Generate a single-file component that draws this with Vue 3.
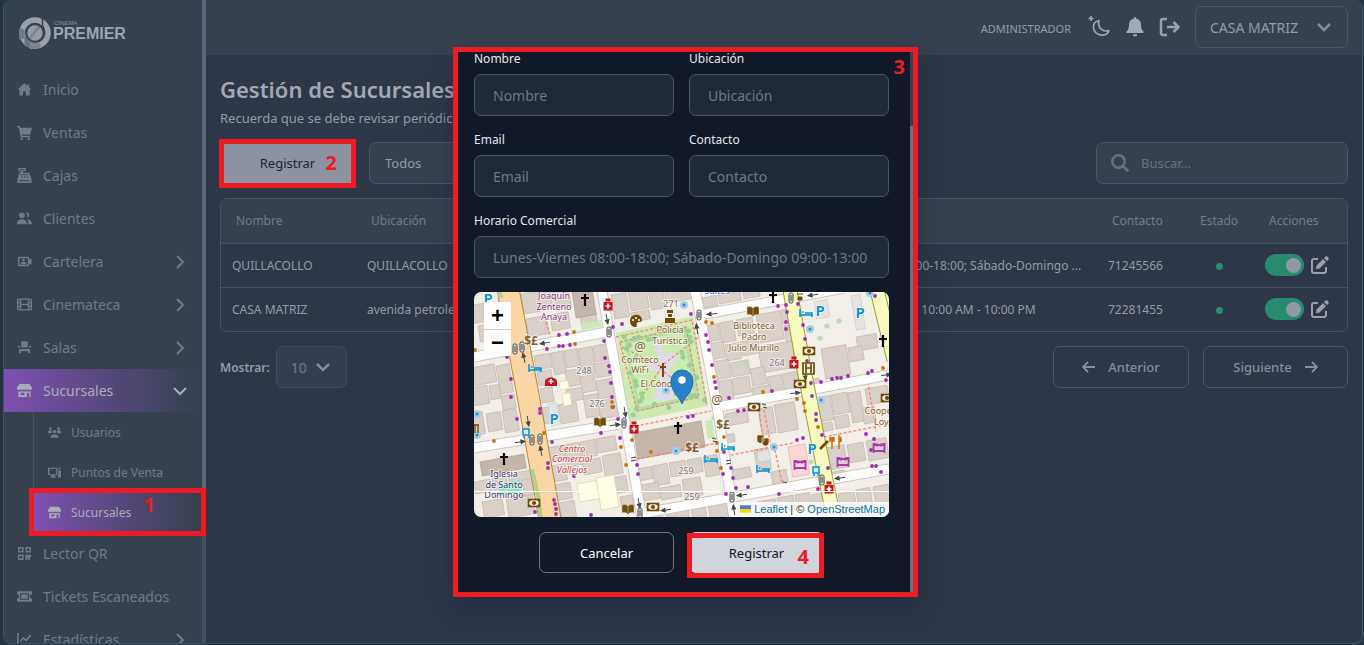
<script setup>
import { ref } from 'vue'

const icons = {
  home: 'M8 1 .5 8h2v6.5h4V10h3v4.5h4V8h2L13 5.6V2.500h-1.500v1.700z',
  cart: 'M0 1h3l.6 2H16l-2 7H5l.3 1.500H14V13H4L1.800 2.500H0zM5 13.500a1.300 1.300 0 1 0 .1 0zM12.500 13.500a1.300 1.300 0 1 0 .1 0z',
  register: 'M1.500 0h8v3.500H6.500V5H13l2.500 7v3.500a.5.5 0 0 1-.5.500H1a.5.5 0 0 1-.5-.5V12L2.500 5H4V3.500H1.500zM3 1.300v1h5v-1zM3.500 6.500v1.200H5V6.500zm3 0v1.200H8V6.500zm3 0v1.200H11V6.500zM4.500 9v1.200H6V9zm3 0v1.200H9V9zm3 0v1.200H12V9zM2.500 13v1.200h11V13z',
  users: 'M5.300 1.500a3 3 0 1 1 0 6 3 3 0 0 1 0-6zM0 14c0-7 10.600-7 10.600 0zM9.500 1.800c4-1 5 4.700 1 5.500 1-1.800.8-4-1-5.500zM11 8.500c3 .3 5 2.500 5 5.500h-4c0-2.200-.2-4-1-5.500z',
  board: 'M2 3h10a1 1 0 0 1 1 1v2l2.500-1.500v7L13 10v2a1 1 0 0 1-1 1H2a1 1 0 0 1-1-1V4a1 1 0 0 1 1-1zm.5 1.500v7h9v-7zM7 5a1.500 1.500 0 1 1 0 3 1.500 1.500 0 0 1 0-3zm-3 6c0-3.500 6-3.500 6 0z',
  film: 'M1.500 1.500h13A1.500 1.500 0 0 1 16 3v10a1.500 1.500 0 0 1-1.500 1.500h-13A1.500 1.500 0 0 1 0 13V3a1.500 1.500 0 0 1 1.500-1.500zM1.500 3v2.500H3V3zm3 0v4.300h7V3zM13 3v2.500h1.500V3zM1.500 6.800v2.500H3V6.800zm11.500 0v2.500h1.500V6.800zM4.500 8.800V13h7V8.800zm-3 1.800V13H3v-2.400zm11.500 0V13h1.500v-2.400z',
  seat: 'M4.500 1.500h7V8h-7zM1 6h2v2.300H1zm12 0h2v2.300h-2zM3 9.500h10a1 1 0 0 1 1 1V14h-2v-2H4v2H2v-3.500a1 1 0 0 1 1-1z',
  store: 'M2.500 1h11L16 5v1.500c-1 1.500-2.500 1.500-3.200 0-.8 1.500-2.400 1.500-3.200 0-.8 1.500-2.400 1.500-3.200 0-.8 1.500-2.400 1.500-3.200 0C2.500 8 1 8 0 6.500V5zM1.500 9h13v6H13v-4.500h-2.500V15h-9zM4 10.500V13h4v-2.500z',
  group: 'M3 1.500a1.700 1.700 0 1 1-.1 0zm10 0a1.700 1.700 0 1 1-.1 0zM8 4.500a2.200 2.200 0 1 1-.1 0zM0 8c0-3.500 4.500-3 5-1.500C4.500 7 4.500 8 5.500 9H0zm16 0c0-3.500-4.500-3-5-1.500.5.5.5 1.500-.5 2.500H16zM3 14.500c0-6 10-6 10 0z',
  pos: 'M1 2h9.500a1 1 0 0 1 1 1v7.500a1 1 0 0 1-1 1H8V13h1.500v1.500H3V13h1.500v-1.500H1a1 1 0 0 1-1-1V3a1 1 0 0 1 1-1zm.7 1.500V10H10V3.500zM12.500 5.500H16V14h-3.500zM13 2h2.500v2H13z',
  qr: 'M1 1h6v6H1zm1.600 1.600v2.800h2.800V2.600zM9 1h6v6H9zm1.600 1.600v2.800h2.800V2.600zM1 9h6v6H1zm1.600 1.600v2.800h2.800v-2.800zM9 9h2.500l1 1.500V9H15v3h-1.200v3H12v-2h-1v2H9z',
  ticket: 'M1 2.500h14a1 1 0 0 1 1 1v2.200a2.300 2.300 0 0 0 0 4.600v2.200a1 1 0 0 1-1 1H1a1 1 0 0 1-1-1v-2.200a2.300 2.300 0 0 0 0-4.600V3.500a1 1 0 0 1 1-1zM3.300 4.500v7h9.400v-7zm1.200 1.200h7v4.600h-7z',
  chart: 'M0 1h1.800v11.200H15V14H0zM3 9.500 6.500 5l3 2.500L14 3l1.200 1.200L9.600 10 6.700 7.500 4.300 10.700z'
}

const menu = [
  { label: 'Inicio', icon: 'home' },
  { label: 'Ventas', icon: 'cart' },
  { label: 'Cajas', icon: 'register' },
  { label: 'Clientes', icon: 'users' },
  { label: 'Cartelera', icon: 'board', more: true },
  { label: 'Cinemateca', icon: 'film', more: true },
  { label: 'Salas', icon: 'seat', more: true },
  {
    label: 'Sucursales', icon: 'store', open: true,
    children: [
      { label: 'Usuarios', icon: 'group' },
      { label: 'Puntos de Venta', icon: 'pos' },
      { label: 'Sucursales', icon: 'store', active: true }
    ]
  },
  { label: 'Lector QR', icon: 'qr' },
  { label: 'Tickets Escaneados', icon: 'ticket' },
  { label: 'Estadísticas', icon: 'chart', more: true }
]

const rows = ref([
  { name: 'QUILLACOLLO', place: 'QUILLACOLLO', hours: 'Lunes-Viernes 08:00-18:00; Sábado-Domingo ...', phone: '71245566', on: true },
  { name: 'CASA MATRIZ', place: 'avenida petrolera', hours: 'Lunes a Domingo: 10:00 AM - 10:00 PM', phone: '72281455', on: true }
])

const fields = [
  { id: 'nombre', label: 'Nombre', hint: 'Nombre' },
  { id: 'ubicacion', label: 'Ubicación', hint: 'Ubicación' },
  { id: 'email', label: 'Email', hint: 'Email' },
  { id: 'contacto', label: 'Contacto', hint: 'Contacto' },
  { id: 'horario', label: 'Horario Comercial', hint: 'Lunes-Viernes 08:00-18:00; Sábado-Domingo 09:00-13:00', wide: true }
]

// City blocks follow the slanted street grid: x, y, width, height
const quad = ([x, y, w, h]) =>
  `M${x} ${y}l${w} ${-0.18 * w}l${0.16 * h} ${h}l${-w} ${0.18 * w}z`

const buildings = [
  [-4, 76, 24, 18], [22, 74, 13, 28], [-3, 96, 16, 18], [15, 94, 10, 14], [27, 104, 13, 14], [12, 122, 14, 18], [28, 119, 14, 22], [-6, 122, 14, 22],
  [4, 34, 12, 16], [19, 30, 18, 20], [-6, 14, 16, 18], [0, 190, 16, 12], [18, 186, 14, 18], [34, 182, 22, 12], [8, 210, 20, 16], [32, 206, 26, 20], [48, 188, 10, 16],
  [47, 2, 16, 20], [64, -1, 12, 18], [78, -4, 16, 22], [52, 27, 20, 18], [76, 23, 18, 16], [106, 24, 16, 12],
  [60, 64, 16, 14], [77, 61, 12, 22], [90, 59, 13, 17], [104, 57, 14, 26], [119, 54, 14, 16], [63, 80, 14, 14], [91, 79, 14, 16], [120, 72, 16, 14], [106, 85, 14, 16], [66, 97, 12, 14], [92, 98, 16, 12], [122, 89, 18, 18], [109, 104, 14, 22], [84, 113, 18, 19], [68, 116, 10, 16], [124, 109, 18, 18],
  [73, 156, 16, 14], [90, 153, 15, 22], [106, 150, 15, 16], [122, 147, 19, 14], [77, 174, 14, 16], [108, 169, 18, 14], [128, 164, 18, 20], [80, 193, 16, 16], [132, 187, 20, 16], [85, 211, 15, 16], [146, 205, 12, 14],
  [137, 3, 15, 24], [154, -1, 18, 20], [174, -4, 14, 22], [190, -5, 26, 16], [157, 21, 18, 9],
  [163, 177, 14, 12], [178, 174, 15, 20], [195, 171, 16, 14], [213, 168, 14, 14], [229, 165, 14, 20], [167, 193, 17, 16], [186, 196, 20, 12], [208, 188, 18, 18], [170, 224, 18, 12], [192, 220, 22, 16], [217, 216, 14, 16], [234, 213, 18, 14],
  [228, 6, 14, 10], [244, 3, 22, 9], [269, 0, 16, 7],
  [231, 34, 13, 16], [245, 31, 14, 20], [262, 28, 16, 16], [282, 23, 24, 28], [307, 18, 8, 14], [234, 52, 15, 16], [251, 53, 14, 16], [266, 50, 18, 14], [284, 55, 34, 26], [238, 70, 16, 18], [256, 71, 18, 14], [241, 90, 16, 20], [258, 87, 17, 16], [276, 77, 14, 17], [293, 85, 14, 14], [308, 82, 15, 16], [278, 96, 18, 10], [310, 34, 8, 16],
  [284, 117, 14, 26], [300, 113, 20, 28], [251, 122, 22, 12], [280, 158, 14, 22], [246, 144, 14, 8], [297, 180, 15, 12], [258, 178, 18, 10],
  [265, 215, 16, 12], [283, 210, 18, 18], [303, 206, 16, 14], [321, 203, 14, 20], [337, 203, 12, 18],
  [347, 57, 25, 30], [382, 45, 20, 14], [374, 56, 14, 14], [335, 88, 10, 8],
  [342, 106, 14, 24], [357, 103, 16, 20], [374, 101, 12, 30], [360, 125, 14, 12], [346, 132, 12, 8], [391, 97, 22, 16], [388, 116, 12, 16],
  [352, 156, 18, 22], [373, 153, 16, 18], [392, 149, 20, 20], [354, 181, 16, 8],
  [364, 202, 16, 22], [382, 198, 14, 16], [399, 195, 20, 24], [384, 216, 14, 12]
]
const specials = [
  { c: 'church', q: [98, 0, 20, 26] }, { c: 'church', q: [6, 170, 44, 14] }, { c: 'church', q: [160, 141, 67, 26] },
  { c: 'yellow', q: [85, 90, 9, 8] }, { c: 'yellow', q: [88, 102, 8, 12] }, { c: 'yellow', q: [103, 192, 22, 18] }, { c: 'yellow', q: [122, 186, 18, 32] },
  { c: 'pink', q: [314, 155, 17, 30] }, { c: 'sport', q: [24, 192, 22, 12] }, { c: 'lot', q: [74, 112, 8, 22] }, { c: 'lot', q: [340, 10, 13, 17] }, { c: 'lot', q: [377, 4, 9, 34] },
  { c: 'grass', q: [107, 32, 20, 6] }, { c: 'grass', q: [231, 129, 7, 18] }, { c: 'grass', q: [55, 49, 22, 5] }, { c: 'lot', q: [283, 160, 12, 10] }
]
const purple = [[85, 43], [93, 42], [85, 54], [89, 54], [96, 53], [73, 57], [139, 35], [148, 32], [130, 49], [131, 66], [135, 74], [136, 80], [137, 91], [138, 105], [139, 115], [144, 127], [33, 65], [37, 87], [37, 105], [66, 117], [66, 121], [43, 127], [78, 150], [127, 141], [146, 146], [163, 173], [164, 182], [100, 184], [74, 171], [74, 176], [80, 208], [81, 212], [82, 217], [82, 222], [61, 220], [117, 223], [217, 22], [232, 43], [234, 50], [235, 58], [238, 73], [241, 90], [242, 96], [255, 106], [264, 119], [270, 118], [298, 99], [304, 14], [312, 13], [313, 20], [312, 30], [312, 37], [329, 33], [331, 47], [333, 69], [337, 91], [338, 104], [342, 122], [342, 128], [347, 90], [358, 87], [363, 86], [367, 86], [374, 84], [394, 81], [398, 79], [412, 88], [354, 176], [398, 174], [402, 174], [407, 180], [344, 197], [323, 148], [329, 146], [257, 176], [259, 186], [262, 196], [274, 195], [250, 160], [249, 182], [252, 202], [305, 202], [392, 142], [400, 147], [214, 125], [219, 124], [348, 143], [397, 158], [401, 4], [324, 12]]
const orange = [[100, 40], [1, 58], [101, 52], [138, 110], [138, 115], [70, 141], [20, 149], [158, 148], [147, 155], [177, 160], [152, 173], [232, 30], [238, 31], [240, 85], [289, 100], [323, 107], [330, 111], [331, 119], [344, 135], [250, 145], [243, 151], [243, 159], [247, 176], [409, 76]]
const trees = [[44, 3], [45, 10], [271, 71], [346, 46], [353, 34], [365, 29], [405, 7], [240, 126], [243, 134], [337, 170]]
const parkTrees = Array.from({ length: 34 }, (_, i) => {
  const t = (i * 7) % 17 / 17
  const s = i < 17 ? 0.06 + (i % 3) * 0.05 : 0.8 + (i % 3) * 0.07
  return i % 2 ? [146 + 76 * t + 14 * s, 44 - 16 * t + 84 * s] : [146 + 72 * s + 13 * t, 46 - 15 * s + 76 * t]
})
const fountains = [[192, 98], [3, 122], [3, 143], [202, 159], [210, 13], [336, 37], [347, 108], [300, 155], [396, 1]]
const lights = [[41, 57], [48, 55], [135, 40], [150, 131], [58, 148], [66, 147], [166, 221], [225, 23], [317, 6], [348, 188], [258, 205]]
const arrows = [[71, 51, 170], [50, 66, 258], [133, 27, 80], [141, 133, -8], [46, 150, -8], [54, 129, 82], [67, 159, 260], [151, 120, 80], [165, 211, 80], [192, 218, 172], [238, 22, 175], [223, 37, 262], [339, 3, 172], [331, 83, 82], [321, 101, -5], [366, 186, 172], [268, 203, 172], [260, 218, 262], [412, 83, -6]]
const crosses = [[111, 8], [204, 136], [30, 167], [299, 5], [409, 49]]
const pharmacies = [[134, 13], [160, 136], [320, 71], [355, 196]]
const money = [[60, 211], [179, 215], [335, 59], [326, 92], [280, 115], [413, 106]]
const books = [[126, 130], [154, 217], [279, 19]]
const beds = [[61, 76], [254, 155], [237, 167], [289, 177], [332, 21]]
const gates = [[326, 173], [369, 170], [405, 156]]
</script>

<template>
  <div class="page">
    <div class="frame">
      <aside class="sidebar">
        <a class="logo" href="#" aria-label="Cinema Premier">
          <svg class="logo-mark" viewBox="0 0 32 32" aria-hidden="true">
            <circle cx="16" cy="16" r="13" fill="none" stroke="#9ba1aa" stroke-width="5.500" />
            <path d="M3 22A13 13 0 0 1 3.500 12" fill="none" stroke="#717a86" stroke-width="5" />
            <path d="M5.500 14v14l5.500 3V22z" fill="#68727f" />
            <path d="M11 24c3 2 7 2 9 0l2 6-5 2h-6z" fill="#7b8490" />
            <path d="M23.500 0v9c2 3 2.500 6 2 9" fill="none" stroke="#364150" stroke-width="1.500" />
            <circle cx="16" cy="16" r="9.500" fill="#364150" />
            <circle cx="16" cy="16" r="7.700" fill="#979da7" />
            <path d="M9.800 20.500 19 8.900a7.700 7.700 0 0 1 2.500 1.700L11.500 22.200z" fill="#7d8590" />
          </svg>
          <span class="logo-text"><small>CINEMA</small><b>PREMIER</b></span>
        </a>
        <nav>
          <template v-for="item in menu" :key="item.label">
            <a href="#" class="item" :class="{ open: item.open }">
              <svg class="icon" viewBox="0 0 16 16" aria-hidden="true"><path :d="icons[item.icon]" /></svg>
              <span>{{ item.label }}</span>
              <svg v-if="item.more || item.open" class="arrow" viewBox="0 0 16 16" aria-hidden="true">
                <path :d="item.open ? 'M2 5l6 6 6-6' : 'M5 2l6 6-6 6'" />
              </svg>
            </a>
            <div v-if="item.children" class="sub">
              <a v-for="c in item.children" :key="c.label" href="#" class="subitem" :class="{ active: c.active }">
                <svg class="subicon" viewBox="0 0 16 16" aria-hidden="true"><path :d="icons[c.icon]" /></svg>
                <span>{{ c.label }}</span>
                <span v-if="c.active" class="mark mark-menu"><b>1</b></span>
              </a>
            </div>
          </template>
        </nav>
        <i class="rail"></i>
      </aside>

      <div class="body">
        <header class="topbar">
          <span class="role">ADMINISTRADOR</span>
          <button class="plain" aria-label="Tema">
            <svg width="24" height="24" viewBox="0 0 24 24" aria-hidden="true">
              <path d="M12 5.500c-4 1-6 4-5.500 7.500 1 7.500 13 10 15.500 2.500-6 2-12-3-10-10z" fill="none" stroke="#a0a6b0" stroke-width="1.700" stroke-linejoin="round" />
              <path d="M4 1v5M1.500 3.500h5" stroke="#a0a6b0" stroke-width="1.700" />
            </svg>
          </button>
          <button class="plain" aria-label="Notificaciones">
            <svg width="20" height="22" viewBox="0 0 20 22" aria-hidden="true">
              <path d="M10 1a1.300 1.300 0 0 1 1.300 1.300v.5c3.200.7 4.700 3 4.700 5.700 0 4 .8 5.500 2.500 7.200V17h-17v-1.300C3.200 14 4 12.500 4 8.500c0-2.700 1.500-5 4.700-5.700v-.5A1.300 1.300 0 0 1 10 1zM7.700 18.300h4.600a2.300 2.300 0 0 1-4.600 0z" fill="#a4aab3" />
            </svg>
          </button>
          <button class="plain" aria-label="Salir">
            <svg width="22" height="20" viewBox="0 0 22 20" aria-hidden="true">
              <path d="M8 2H4a2 2 0 0 0-2 2v12a2 2 0 0 0 2 2h4M8 10h11M14.500 5l5 5-5 5" fill="none" stroke="#9aa1ab" stroke-width="2.500" stroke-linejoin="round" />
            </svg>
          </button>
          <span class="select select-branch">
            <select aria-label="Sucursal"><option>CASA MATRIZ</option></select>
            <svg viewBox="0 0 16 16" aria-hidden="true"><path d="M2 5l6 6 6-6" /></svg>
          </span>
        </header>

        <main>
          <h1>Gestión de Sucursales</h1>
          <p class="lead">Recuerda que se debe revisar periódicamente</p>
          <div class="tools">
            <button class="register">Registrar<span class="mark"><b>2</b></span></button>
            <span class="select select-filter">
              <select aria-label="Filtro"><option>Todos</option></select>
              <svg viewBox="0 0 16 16" aria-hidden="true"><path d="M2 5l6 6 6-6" /></svg>
            </span>
            <label class="search">
              <svg viewBox="0 0 18 18" aria-hidden="true"><circle cx="7.500" cy="7.500" r="6.200" /><path d="M12 12l5.300 5.300" /></svg>
              <input type="search" placeholder="Buscar..." aria-label="Buscar" />
            </label>
          </div>

          <div class="tablebox">
            <table>
              <colgroup><col class="c1" /><col class="c1" /><col /><col class="c4" /><col class="c5" /><col class="c6" /><col class="c7" /></colgroup>
              <thead>
                <tr><th>Nombre</th><th>Ubicación</th><th></th><th></th><th>Contacto</th><th>Estado</th><th>Acciones</th></tr>
              </thead>
              <tbody>
                <tr v-for="r in rows" :key="r.phone">
                  <td>{{ r.name }}</td>
                  <td>{{ r.place }}</td>
                  <td></td>
                  <td>{{ r.hours }}</td>
                  <td>{{ r.phone }}</td>
                  <td class="state"><i class="dot"></i></td>
                  <td>
                    <div class="actions">
                      <input v-model="r.on" type="checkbox" class="toggle" :aria-label="'Activar ' + r.name" />
                      <button class="plain" :aria-label="'Editar ' + r.name">
                        <svg width="18" height="18" viewBox="0 0 18 18" aria-hidden="true">
                          <path d="M7 3H3a2 2 0 0 0-2 2v10a2 2 0 0 0 2 2h10a2 2 0 0 0 2-2v-4" fill="none" stroke="#9aa0ab" stroke-width="2" />
                          <path d="M5.500 9.500 12 3l3 3-6.500 6.500-3.500.7zM13 2l1.500-1.500c1.600-1 4 1.200 3 3L16 5z" fill="#9aa0ab" />
                        </svg>
                      </button>
                    </div>
                  </td>
                </tr>
              </tbody>
            </table>
          </div>

          <div class="pager">
            <label for="size">Mostrar:</label>
            <span class="select select-size">
              <select id="size"><option>10</option></select>
              <svg viewBox="0 0 16 16" aria-hidden="true"><path d="M2 5l6 6 6-6" /></svg>
            </span>
            <button class="step prev">
              <svg viewBox="0 0 14 12" aria-hidden="true"><path d="M6 1 1 6l5 5M1 6h12" /></svg>Anterior
            </button>
            <button class="step next">
              Siguiente<svg viewBox="0 0 14 12" aria-hidden="true"><path d="M8 1l5 5-5 5M13 6H1" /></svg>
            </button>
          </div>
        </main>
      </div>
    </div>

    <div class="overlay">
      <div class="modal" role="dialog" aria-label="Registrar sucursal">
        <form class="form" @submit.prevent>
          <div class="grid">
            <div v-for="f in fields" :key="f.id" class="field" :class="{ wide: f.wide }">
              <label :for="f.id">{{ f.label }}</label>
              <input :id="f.id" type="text" :placeholder="f.hint" />
            </div>
          </div>

          <div class="map">
            <svg class="tiles" viewBox="0 0 415 225" preserveAspectRatio="xMidYMid slice" role="img" aria-label="Mapa">
              <defs>
                <g id="light"><rect x="-2" y="-5" width="4" height="10" rx="1.500" fill="#ddd" stroke="#444" stroke-width="1" /><path d="M-1-2h2M-1 0h2M-1 2h2" stroke="#444" stroke-width="1" /></g>
                <path id="way" d="M-5 0H3M1-1.800 5 0 1 1.800z" fill="#444" stroke="#444" stroke-width="1" />
                <path id="cross" d="M0-6V6M-4-2H4" stroke="#000" stroke-width="2.200" />
                <g id="pharmacy"><path d="M-2.500-6.500h5v3h-5zM-4.500-3h9v8.500h-9z" fill="#c8141e" /><path d="M0-1.500v5M-2.500 1h5" stroke="#fff" stroke-width="1.700" /></g>
                <g id="cash"><rect x="-5.500" y="-3.500" width="11" height="7" fill="#f2efe9" stroke="#734a08" stroke-width="1.600" /><circle r="2.100" fill="#734a08" /><path d="M-5-3h2.500L-5-1zM5-3H2.500L5-1zM-5 3h2.500L-5 1zM5 3H2.500L5 1z" fill="#734a08" /></g>
                <path id="book" d="M-6-4c3-1 5 0 6 1 1-1 3-2 6-1v8c-3-1-5 0-6 1.500C-1 4-3 3-6 4zM0-3v7" fill="#734a08" stroke="#e7ddcc" stroke-width=".5" />
                <path id="bed" d="M-6-4v8M-6 2H6v2M6 2V0H-1M-4-1h1.500" fill="none" stroke="#0092da" stroke-width="1.500" />
                <path id="gate" d="M-5.500-5v10M5.500-5v10M-6-3H6M-4-5v2M4-5v2M-6 3H6M-2-4.500v3M2-4.500v3" fill="none" stroke="#ac39ac" stroke-width="1.800" />
              </defs>
              <rect width="415" height="225" fill="#f2efe9" />
              <path v-for="(b, i) in buildings" :key="'b' + i" class="building" :d="quad(b)" />
              <path v-for="(b, i) in specials" :key="'s' + i" :class="b.c" :d="quad(b.q)" />

              <path d="M142 41 219 24l15 90-79 16z" fill="#cdebb0" />
              <path d="M150 48 213 34l12 72-62 14z" fill="#b5dfa0" />
              <path d="M154 52 209 39l11 64-54 12z" fill="#cdebb0" />
              <path d="M180 45c6 2 9 10 10 18 6-4 12-4 13 2 1 5-3 9-9 11 3 9 14 21 16 29l-31 6c1-9 7-22 6-32-8 2-11-3-10-8 2-5 7-5 10-3-1-8-5-14-8-19z" fill="#dddde8" />
              <g class="foot">
                <path d="M142 45 218 28l15 86M146 50l66-15 13 70-62 14zM148 55l40 20-26 38M190 72l36-28M190 80l36 28M152 136l85-17M138 50l14 80M163 167l80-16M247 165l72-14M290 118l7 36M301 158l9 42M345 146l70-14M394 90l8 50M284 112l6 40M72 30l8 26" />
              </g>
              <circle v-for="(t, i) in parkTrees" :key="'pt' + i" :cx="t[0]" :cy="t[1]" r="2.500" fill="#9bcf93" />
              <circle v-for="(t, i) in trees" :key="'t' + i" :cx="t[0]" :cy="t[1]" r="2.600" fill="#bddcaf" />

              <g class="casing">
                <path d="M0 65 133 40M226 23 370-4M0 156 151 131M239 116 415 83M165 222 415 177" />
                <path d="M128-2 135 40 151 130 168 227M221-2 226 23 244 120 260 227" />
              </g>
              <g class="road">
                <path d="M0 65 133 40M226 23 370-4M0 156 151 131M239 116 415 83M165 222 415 177" />
                <path d="M128-2 135 40 151 130 168 227M221-2 226 23 244 120 260 227" />
              </g>
              <g fill="none">
                <path d="M34-3 54 103 76 227" stroke="#b08a35" stroke-width="23" /><path d="M34-3 54 103 76 227" stroke="#fcd6a4" stroke-width="21" />
                <path d="M58 177l6 26 3 24" stroke="#b5cf8c" stroke-width="4" /><path d="M25 0l2 6" stroke="#add19e" stroke-width="5" />
                <path d="M316-2 331 83 353 193 360 227M403-2 420 68" stroke="#a0a030" stroke-width="15" /><path d="M316-2 331 83 353 193 360 227M403-2 420 68" stroke="#f7fabf" stroke-width="13" />
              </g>

              <circle v-for="(p, i) in purple" :key="'p' + i" :cx="p[0]" :cy="p[1]" r="1.900" fill="#a12fad" />
              <circle v-for="(p, i) in orange" :key="'o' + i" :cx="p[0]" :cy="p[1]" r="1.900" fill="#c77400" />
              <g v-for="(p, i) in fountains" :key="'f' + i"><circle :cx="p[0]" :cy="p[1]" r="4" fill="#a5cfe8" /><circle :cx="p[0]" :cy="p[1]" r="1.500" fill="#3e86c8" /></g>
              <use v-for="(p, i) in lights" :key="'l' + i" href="#light" :x="p[0]" :y="p[1]" />
              <use v-for="(p, i) in arrows" :key="'a' + i" href="#way" :transform="`translate(${p[0]} ${p[1]}) rotate(${p[2]})`" />
              <use v-for="(p, i) in crosses" :key="'c' + i" href="#cross" :x="p[0]" :y="p[1]" />
              <use v-for="(p, i) in pharmacies" :key="'h' + i" href="#pharmacy" :x="p[0]" :y="p[1]" />
              <use v-for="(p, i) in money" :key="'m' + i" href="#cash" :x="p[0]" :y="p[1]" />
              <use v-for="(p, i) in books" :key="'k' + i" href="#book" :x="p[0]" :y="p[1]" />
              <use v-for="(p, i) in beds" :key="'e' + i" href="#bed" :x="p[0]" :y="p[1]" />
              <use v-for="(p, i) in gates" :key="'g' + i" href="#gate" :x="p[0]" :y="p[1]" />

              <path d="M71 94v-4c0-6 12-6 12 0v4z" fill="#c8141e" /><path d="M77 87v5M74.500 89.500h5" stroke="#fff" stroke-width="1.600" />
              <path d="M156 29c0-8 12-8 12-1 0 3-4 1-5 3s1 4-2 4c-3 0-5-3-5-6z" fill="#734a08" /><g fill="#fff"><circle cx="159" cy="28" r="1" /><circle cx="162" cy="26" r="1" /><circle cx="165" cy="28" r="1" /></g>
              <path d="M193 18h6v3h-6zM194 22h4v3h-4zM191 31v-5h10v5z" fill="#734a08" />
              <path d="M329 71h11v11h-11zM332 72v9M337 72v9M332 76h5" fill="#f2efe9" stroke="#734a08" stroke-width="1.700" />
              <path d="M283 143h7v6c-3 4-6 2-7 0zM288 146h7v5c-2 5-6 3-7 0z" fill="#734a08" stroke="#f2efe9" stroke-width=".7" />
              <path d="M189 71v14M186 75h6" stroke="#734a08" stroke-width="2" />
              <path d="M323 2h6M324 5h4v3h-4z" stroke="#734a08" fill="#734a08" />
              <path d="M346 157l8-8" stroke="#734a08" stroke-width="2.600" /><path d="M358 145v12M356 145v4h4v-4M365 144c3 2 3 6 0 6zM365 144v13" fill="#c77400" stroke="#c77400" stroke-width="1.500" />
              <path d="M49 137h6v6h-6zM339 175h6v6h-6zM49 145h2M54 145h2M339 183h2M344 183h2" fill="#d5edf8" stroke="#0092da" stroke-width="1.500" />
              <path d="M0 133h5M1 133v8M4 133v8" stroke="#734a08" stroke-width="1.300" />
              <path d="M157 166l5-1M157 169l5-1M252 169l5-1M252 172l5-1M238 146l4 1M239 149l4 1M288 112l4 1M289 115l4 1M309 190l4 1" stroke="#444" />

              <g class="parking"><text x="14" y="12">P</text><text x="80" y="132">P</text><text x="346" y="24">P</text><text x="386" y="26">P</text><text x="338" y="162">P</text></g>
              <g class="house"><text x="110" y="82">248</text><text x="123" y="115">276</text><text x="197" y="15">271</text><text x="303" y="74">264</text><text x="212" y="182">259</text><text x="218" y="208">259</text></g>
              <g class="brown at"><text x="166" y="59">@</text><text x="243" y="112">@</text></g>
              <g class="brown cur"><text x="57" y="53">$£</text><text x="249" y="137">$£</text><text x="218" y="160">$£</text></g>
              <g class="purple"><text x="80" y="7">Joaquín</text><text x="80" y="18">Zenteno</text><text x="80" y="28">Anaya</text></g>
              <g class="brown">
                <text x="196" y="41">Policía</text><text x="196" y="52">Turística</text><text x="166" y="71">Comteco</text><text x="166" y="81">WiFi</text><text x="187" y="95">El Cóndor</text>
                <text x="280" y="37">Biblioteca</text><text x="280" y="48">Padro</text><text x="280" y="59">Julio Murillo</text><text x="406" y="122">Cooper</text><text x="410" y="133">Loyo</text>
              </g>
              <g class="mall"><text x="98" y="160">Centro</text><text x="98" y="170">Comercial</text><text x="98" y="181">Vallejos</text></g>
              <g class="temple"><text x="30" y="185">Iglesia</text><text x="30" y="196">de Santo</text><text x="30" y="206">Domingo</text></g>
              <text class="suite" x="243" y="2">Suites</text>
              <path d="M0 199.500H415" stroke="#fff" />
              <path d="M208 112c-3-8-11-12-11-23a11 11 0 0 1 22 0c0 11-8 15-11 23z" fill="#2a81cb" stroke="#216ba8" />
              <circle cx="208" cy="88" r="3.800" fill="#fff" />
            </svg>
            <div class="zoom">
              <button type="button" aria-label="Acercar">+</button>
              <button type="button" aria-label="Alejar">−</button>
            </div>
            <div class="credit">
              <svg viewBox="0 0 12 8" aria-hidden="true"><path fill="#4c7be1" d="M0 0h12v4H0z" /><path fill="#ffd500" d="M0 4h12v4H0z" /></svg>
              <a href="#">Leaflet</a> | © <a href="#">OpenStreetMap</a>
            </div>
          </div>

          <div class="buttons">
            <button type="button" class="cancel">Cancelar</button>
            <button type="submit" class="submit">Registrar<span class="mark mark-submit"><b>4</b></span></button>
          </div>
        </form>
        <b class="three">3</b>
        <i class="scroll"></i>
      </div>
    </div>
  </div>
</template>

<style>
html, body { height: 100%; margin: 0; overflow: hidden; background: #243442; }
#app { height: 100%; }
</style>

<style scoped>
* { box-sizing: border-box; }
.page { position: relative; height: 100vh; padding: 0 1px 1px 3px; font-family: "Noto Sans", "Open Sans", sans-serif; font-size: 13px; color: #949ba5; background: #243442; overflow: hidden; }
a { color: inherit; text-decoration: none; }
button, input, select { font: inherit; color: inherit; }
.plain { display: grid; place-items: center; padding: 0; border: 0; background: none; }
.frame { display: flex; height: 100%; border: 1px solid #465261; border-top: 0; border-radius: 8px; background: #2e3748; overflow: hidden; }

.sidebar { position: relative; flex: 0 0 202px; padding-right: 4px; background: #364150; overflow: hidden; }
.rail { position: absolute; top: 0; right: 0; width: 4px; height: 100%; background: linear-gradient(#5b667a 83%, #434f60 83%); }
.logo { display: flex; height: 68px; padding: 17px 0 0 15px; gap: 2px; }
.logo-mark { width: 32px; height: 32px; }
.logo-text { display: flex; flex-direction: column; padding-top: 3px; color: #a0a5ad; font-family: "Liberation Sans", Arial, sans-serif; }
.logo-text small { padding-left: 1px; font-size: 6px; line-height: 6px; color: #858d98; }
.logo-text b { font-size: 16px; line-height: 16px; }
.item { display: flex; align-items: center; height: 43px; padding: 0 14px 0 13px; gap: 11px; color: #717a88; font-size: 14px; }
.icon { width: 15px; height: 15px; fill: currentColor; fill-rule: evenodd; }
.arrow { width: 16px; height: 16px; margin-left: auto; fill: none; stroke: currentColor; stroke-width: 2; }
.item.open { color: #a9aeb6; background: linear-gradient(90deg, #7d50b2, #364150 96%); }
.sub { margin-left: 29px; border-left: 1px solid #465261; }
.subitem { position: relative; display: flex; align-items: center; height: 40px; padding-left: 14px; gap: 10px; color: #717a88; font-size: 12px; }
.subicon { width: 13px; height: 13px; fill: currentColor; fill-rule: evenodd; }
.subitem.active { color: #a9aeb6; background: linear-gradient(90deg, #7d50b2, #364150 96%); }

.mark { position: absolute; inset: -3px -1px -4px -1px; border: 5px solid #ed1c24; color: #ed1c24; }
.mark b { position: absolute; right: 14px; top: 7px; font-size: 20px; line-height: 24px; }
.mark-menu { z-index: 2; inset: -4px -4px -4px -5px; }
.mark-menu b { right: 46px; top: 0; }
.mark-submit { inset: 1px 0 -5px -2px; }
.mark-submit b { right: 10px; }

.body { flex: 1; min-width: 0; display: flex; flex-direction: column; }
.topbar { display: flex; align-items: center; justify-content: flex-end; height: 55px; padding: 0 14px 1px 0; background: #364150; }
.role { margin-right: 16px; padding-top: 3px; font-size: 11px; }
.topbar .plain { margin-right: 14px; }
.select { position: relative; display: block; height: 42px; }
.select select { width: 100%; height: 100%; padding: 0 14px; border: 1px solid #4a5665; border-radius: 7px; background: #364150; appearance: none; font-size: 14px; }
.select svg { position: absolute; right: 16px; top: 13px; width: 16px; height: 16px; fill: none; stroke: #848c98; stroke-width: 2.500; pointer-events: none; }
.select-branch { width: 153px; }
.select-filter { width: 150px; }
.select-filter select { font-size: 13px; padding-left: 15px; }
.select-size { width: 71px; color: #717a88; }
.select-size select { border-color: #414d5e; background: #333e4e; }

main { padding: 18px 14px 0 14px; }
h1 { margin: 0; font-size: 22px; line-height: 32px; font-weight: 600; color: #a3a8b1; }
.lead { margin: 3px 0 13px; font-size: 13px; line-height: 21px; }
.tools { display: flex; gap: 14px; }
.register { position: relative; width: 135px; height: 42px; border: 0; border-radius: 7px; background: #8b93a0; color: #1c2536; }
.search { display: flex; align-items: center; gap: 12px; width: 252px; height: 42px; margin-left: auto; padding: 0 14px; border: 1px solid #4a5665; border-radius: 7px; background: #364150; }
.search svg { flex: none; width: 18px; height: 18px; fill: none; stroke: #667180; stroke-width: 2.500; }
.search input { flex: 1; min-width: 0; padding: 0; border: 0; outline: 0; background: none; }
.search input::placeholder { color: #667180; opacity: 1; }

.tablebox { margin-top: 14px; border: 1px solid #465261; border-radius: 7px; overflow: hidden; }
table { width: 100%; table-layout: fixed; border-collapse: collapse; font-size: 12px; }
.c1 { width: 135px; }
.c4 { width: 292px; }
.c5 { width: 88px; }
.c6 { width: 69px; }
.c7 { width: 93px; }
th { height: 44px; padding: 0 15px; text-align: left; font-weight: 400; color: #737c89; background: #364150; }
td { height: 44px; padding: 0 11px; border-top: 1px solid #465261; white-space: nowrap; overflow: hidden; }
.state { text-align: center; }
.dot { display: inline-block; width: 7px; height: 7px; border-radius: 50%; background: #26906f; }
.actions { display: flex; align-items: center; gap: 7px; }
.toggle { position: relative; width: 39px; height: 22px; margin: 0; border-radius: 11px; appearance: none; background: #465261; }
.toggle:checked { background: #278b70; }
.toggle::after { content: ""; position: absolute; top: 4px; left: 4px; width: 15px; height: 15px; border-radius: 50%; background: #9299a4; }
.toggle:checked::after { left: 21px; }

.pager { display: flex; align-items: center; margin-top: 14px; }
.pager label { margin-right: 6px; font-size: 12px; font-weight: 600; color: #949ba5; }
.step { display: flex; align-items: center; justify-content: center; gap: 12px; height: 42px; border: 1px solid #4a5665; border-radius: 7px; background: none; font-weight: 500; color: #858d99; }
.step svg { width: 14px; height: 12px; fill: none; stroke: currentColor; stroke-width: 1.800; }
.prev { width: 136px; margin-left: auto; }
.next { width: 145px; margin-left: 14px; }

.overlay { position: absolute; inset: 0; display: flex; justify-content: center; align-items: flex-start; padding: 47px 0 0 7px; }
.modal { position: relative; width: 465px; border: 5px solid #ed1c24; background: #111827; box-shadow: 0 12px 24px rgba(20, 28, 42, .35); }
.scroll { position: absolute; top: 0; right: 0; width: 3px; height: 100%; background: linear-gradient(#364150 74px, #6b7280 74px); }
.three { position: absolute; top: 3px; right: 8px; font-size: 20px; line-height: 24px; color: #ed1c24; }
.form { padding: 0 24px 19px 16px; }
.grid { display: grid; grid-template-columns: 1fr 1fr; column-gap: 15px; row-gap: 14px; }
.field { display: flex; flex-direction: column; }
.field.wide { grid-column: 1 / -1; }
.field label { height: 25px; line-height: 20px; font-size: 12px; color: #e5e7eb; }
.field:nth-child(-n+2) label { height: 22px; line-height: 13px; }
.field input { width: 100%; height: 42px; padding: 0 18px; border: 1px solid #4b5563; border-radius: 7px; background: #1f2937; outline: 0; font-size: 14px; }
.field input::placeholder { color: #6f7885; opacity: 1; }

.map { position: relative; height: 225px; margin-top: 14px; border-radius: 7px; overflow: hidden; }
.tiles { display: block; width: 100%; height: 100%; }
.building { fill: #d9d0c9; stroke: #c3b5aa; stroke-width: .7; }
.church { fill: #c4b6ab; stroke: #a99c92; stroke-width: .7; }
.yellow { fill: #ffffe5; stroke: #d8d4a8; stroke-width: .7; }
.pink { fill: #ffd6d1; stroke: #e3b2ac; stroke-width: .7; }
.sport { fill: #88e0be; }
.lot { fill: #e4e4e4; stroke: #ccc; stroke-width: .7; }
.grass { fill: #cdebb0; }
.foot { fill: none; stroke: #fa8072; stroke-width: 1.300; stroke-dasharray: 3 2; }
.casing { fill: none; stroke: #ccc7c0; stroke-width: 11; }
.road { fill: none; stroke: #fff; stroke-width: 9; }
.tiles text { font-family: "Noto Sans", sans-serif; font-size: 9px; text-anchor: middle; paint-order: stroke; stroke: rgba(255, 255, 255, .6); stroke-width: 2px; }
.tiles .parking text { font-size: 15px; font-weight: 600; fill: #0092da; }
.tiles .house text { fill: #777; }
.tiles .brown text { fill: #845f2c; }
.tiles .at text { font-size: 13px; }
.tiles .cur text { font-size: 12px; font-weight: 700; }
.tiles .purple text { fill: #8d3b7c; }
.tiles .mall text { fill: #d33c3c; font-style: italic; }
.tiles .temple text { fill: #3b3b6d; }
.tiles .suite { fill: #3a6fd0; }
.zoom { position: absolute; top: 10px; left: 10px; width: 27px; border-radius: 2px; overflow: hidden; }
.zoom button { display: block; width: 100%; height: 27px; padding: 0; border: 0; background: #fff; color: #000; font: bold 22px/26px "Liberation Sans", Arial, sans-serif; }
.zoom button + button { border-top: 1px solid #ccc; }
.credit { position: absolute; right: 0; bottom: 0; height: 15px; padding: 0 4px; line-height: 15px; background: rgba(255, 255, 255, .8); font-family: "Liberation Sans", Arial, sans-serif; font-size: 11px; color: #333; }
.credit svg { width: 11px; height: 8px; margin-right: 3px; }
.credit a { color: #0078a8; }
.buttons { display: flex; justify-content: center; gap: 15px; margin-top: 15px; }
.buttons button { width: 135px; height: 41px; border-radius: 7px; }
.cancel { border: 1px solid #6b7280; background: none; color: #fff; }
.submit { position: relative; border: 0; background: #d1d5db; color: #111827; }
</style>
